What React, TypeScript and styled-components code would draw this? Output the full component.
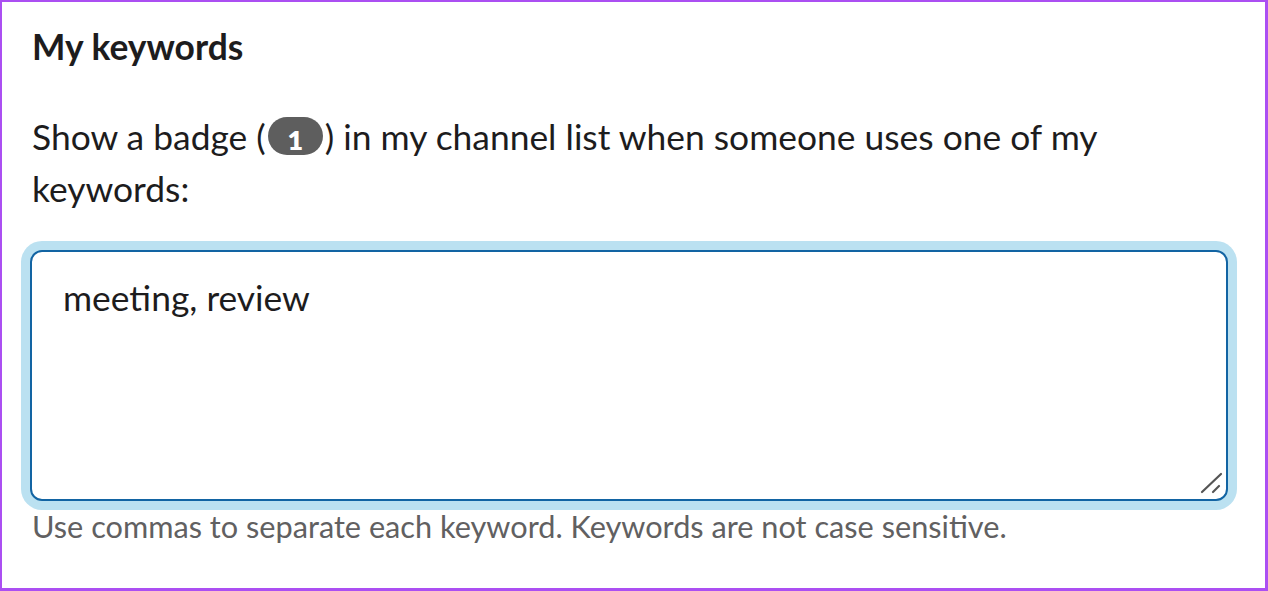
import React from "react"
import styled, { createGlobalStyle } from "styled-components"

const GlobalStyle = createGlobalStyle`
	html,
	body {
		margin: 0;
		padding: 0;
		background: #ffffff;
	}
	* {
		box-sizing: border-box;
	}
`

const Frame = styled.div`
	width: 1268px;
	height: 591px;
	border: 2px solid #ab4ff2;
	border-right-width: 3px;
	border-bottom-width: 3px;
	padding: 23px 35px 0 30px;
	font-family: Lato, "Noto Sans", sans-serif;
	color: #1d1c1d;
	background: #ffffff;
	overflow: hidden;
`

const Heading = styled.h2`
	margin: 0;
	font-size: 35.4px;
	line-height: 44px;
	font-weight: 700;
`

const Intro = styled.p`
	margin: 42px 0 0;
	font-size: 35.4px;
	line-height: 52px;
	font-weight: 400;
`

const Badge = styled.span`
	display: inline-block;
	width: 55px;
	height: 38px;
	margin: 0 2px;
	padding-top: 9px;
	border-radius: 19px;
	background: #5e5e5e;
	color: #ffffff;
	font-size: 27px;
	line-height: 27px;
	font-weight: 800;
	text-align: center;
	vertical-align: baseline;
`

const Field = styled.div`
	position: relative;
	margin: 35px 0 0 -2px;
	width: 1198px;
	height: 251px;
	border: 2px solid #1264a3;
	border-radius: 12px;
	box-shadow: 0 0 0 9px #bbe1f1;
	background: #ffffff;
`

const Input = styled.textarea`
	display: block;
	width: 100%;
	height: 100%;
	border: none;
	outline: none;
	resize: none;
	background: transparent;
	padding: 20px 31px;
	border-radius: 10px;
	font-family: Lato, "Noto Sans", sans-serif;
	font-size: 35.4px;
	line-height: 52px;
	color: #1d1c1d;
`

const Grip = styled.svg`
	position: absolute;
	right: 3px;
	bottom: 5px;
	width: 24px;
	height: 24px;
	pointer-events: none;
`

const Hint = styled.p`
	margin: 6px 0 0;
	font-size: 30.7px;
	line-height: 40px;
	color: #616061;
`

const App: React.FC = () => {
	return (
		<>
			<GlobalStyle />
			<Frame>
				<Heading>My keywords</Heading>
				<Intro>
					Show a badge (<Badge>1</Badge>) in my channel list when someone uses one of my keywords:
				</Intro>
				<Field>
					<Input defaultValue="meeting, review" spellCheck={false} />
					<Grip viewBox="0 0 24 24">
						<line x1="3" y1="22" x2="22" y2="4" stroke="#555555" strokeWidth="2.2" strokeLinecap="round" />
						<line x1="14" y1="22" x2="20" y2="16" stroke="#555555" strokeWidth="2.2" strokeLinecap="round" />
					</Grip>
				</Field>
				<Hint>Use commas to separate each keyword. Keywords are not case sensitive.</Hint>
			</Frame>
		</>
	)
}

export default App
